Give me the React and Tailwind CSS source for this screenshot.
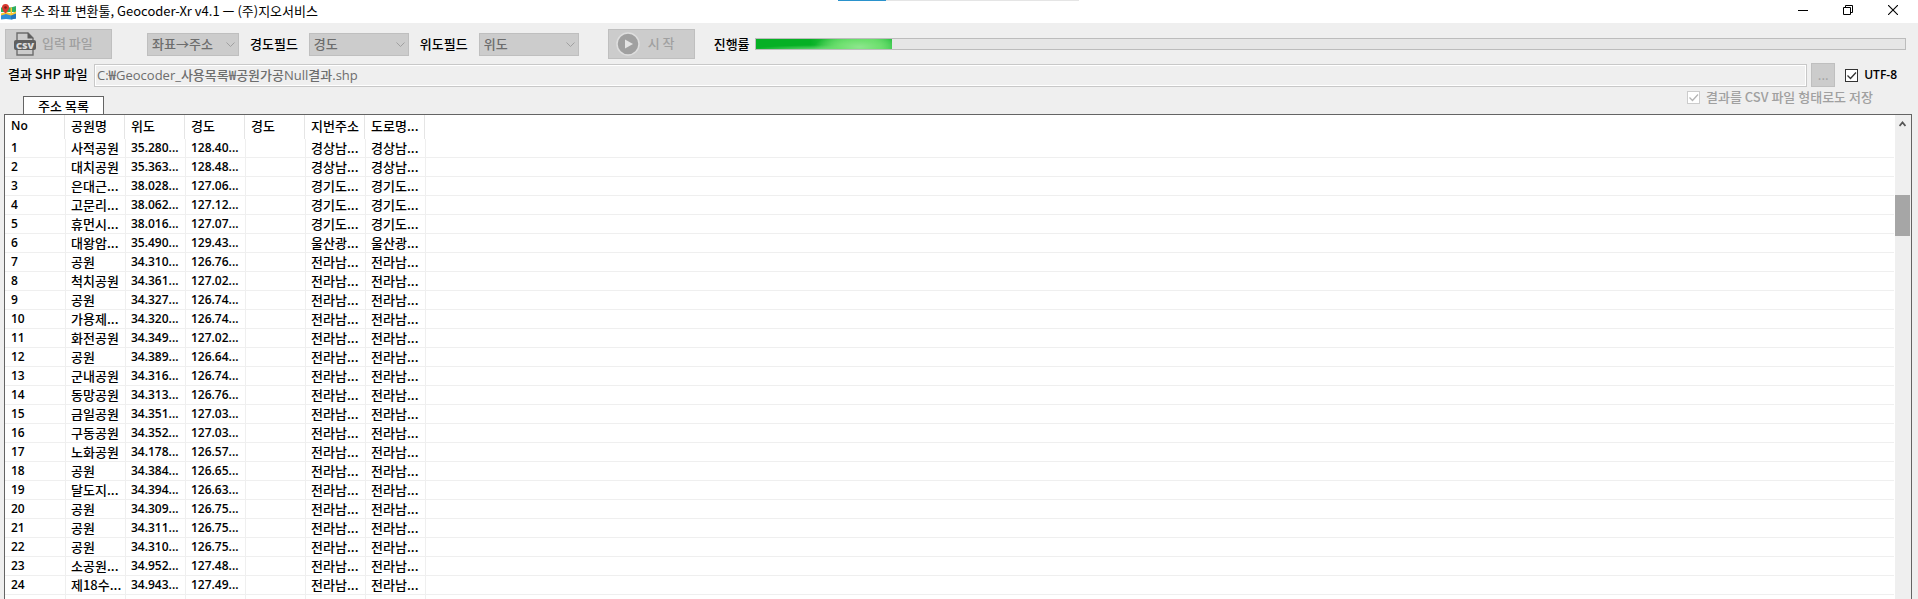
const ROWS = [
  ["사적공원", "35.280...", "128.40...", "경상남..."],
  ["대치공원", "35.363...", "128.48...", "경상남..."],
  ["은대근...", "38.028...", "127.06...", "경기도..."],
  ["고문리...", "38.062...", "127.12...", "경기도..."],
  ["휴먼시...", "38.016...", "127.07...", "경기도..."],
  ["대왕암...", "35.490...", "129.43...", "울산광..."],
  ["공원", "34.310...", "126.76...", "전라남..."],
  ["척치공원", "34.361...", "127.02...", "전라남..."],
  ["공원", "34.327...", "126.74...", "전라남..."],
  ["가용제...", "34.320...", "126.74...", "전라남..."],
  ["화전공원", "34.349...", "127.02...", "전라남..."],
  ["공원", "34.389...", "126.64...", "전라남..."],
  ["군내공원", "34.316...", "126.74...", "전라남..."],
  ["동망공원", "34.313...", "126.76...", "전라남..."],
  ["금일공원", "34.351...", "127.03...", "전라남..."],
  ["구동공원", "34.352...", "127.03...", "전라남..."],
  ["노화공원", "34.178...", "126.57...", "전라남..."],
  ["공원", "34.384...", "126.65...", "전라남..."],
  ["달도지...", "34.394...", "126.63...", "전라남..."],
  ["공원", "34.309...", "126.75...", "전라남..."],
  ["공원", "34.311...", "126.75...", "전라남..."],
  ["공원", "34.310...", "126.75...", "전라남..."],
  ["소공원...", "34.952...", "127.48...", "전라남..."],
  ["제18수...", "34.943...", "127.49...", "전라남..."],
];

const HEADERS = ["No", "공원명", "위도", "경도", "경도", "지번주소", "도로명..."];

const PROGRESS = 11.9;

function MapIcon() {
  return (
    <svg width="15" height="16" viewBox="0 0 15 16" aria-hidden="true">
      <path d="M0 3.500 5 3l5 .5L15 2v6H0z" fill="#2fae62" />
      <path d="M0 10l5-1.500 5 1.500 5-2v6.500l-5 1-5-.5-5 .5z" fill="#2f8fd8" />
      <path d="M10 10l5-2v6.500l-5 1z" fill="#2576bd" />
      <path d="M0 9.500 5 8l5 1.500L15 7.500v2l-5 2-5-1.500-5 1.500z" fill="#fdc62f" />
      <path d="M9.500 3.500h1.500v7H9.500z" fill="#fdc62f" />
      <path d="M4.500 0A3.500 3.500 0 0 1 8 3.500C8 6 4.500 9.500 4.500 9.500S1 6 1 3.500A3.500 3.500 0 0 1 4.500 0z" fill="#d8392f" />
      <circle cx="4.500" cy="3.500" r="1.300" fill="#7c1f1a" />
    </svg>
  );
}

function CsvIcon() {
  return (
    <svg width="22" height="24" viewBox="0 0 22 24" aria-hidden="true">
      <path d="M3 8V1h11l5 5v2M3 18v5h16v-5" fill="none" stroke="#6d6d6d" strokeWidth="1.400" />
      <path d="M13.500 0.500v6H19.500z" fill="#5f5f5f" />
      <rect x="0" y="8" width="22" height="10" rx="2" fill="#5f5f5f" />
      <text x="11" y="16.500" textAnchor="middle" fontFamily="Open Sans" fontWeight="800" fontSize="9.500" fill="#dcdcdc">CSV</text>
    </svg>
  );
}

function PlayIcon() {
  return (
    <svg width="24" height="24" viewBox="0 0 24 24" aria-hidden="true">
      <circle cx="12" cy="12" r="11" fill="#a0a0a0" stroke="#dedede" strokeWidth="1.500" />
      <path d="M9 7.500 17 12l-8 4.500z" fill="#e4e4e4" />
    </svg>
  );
}

function Field({ id, label, value, width }) {
  return (
    <>
      {label && (
        <label htmlFor={id} className="font-medium whitespace-nowrap">
          {label}
        </label>
      )}
      <div className={`relative ${width}`}>
        <select
          id={id}
          disabled
          aria-label={label ? undefined : "변환 방향"}
          className="block h-[23px] w-full appearance-none border border-[#bfbfbf] bg-[#cccccc] px-1 font-medium text-[#6d6d6d] opacity-100"
        >
          <option>{value}</option>
        </select>
        <svg className="pointer-events-none absolute top-2 right-1" width="9" height="7" viewBox="0 0 9 7" aria-hidden="true">
          <path d="M0.500 1.500l4 4 4-4" fill="none" stroke="#a0a0a0" />
        </svg>
      </div>
    </>
  );
}

function Check({ id, label, disabled }) {
  return (
    <div className="flex items-center gap-1.5">
      <span className="relative block size-[13px]">
        <input
          id={id}
          type="checkbox"
          defaultChecked
          disabled={disabled}
          className="block size-[13px] appearance-none border border-[#333333] bg-white disabled:border-[#cccccc]"
        />
        <svg
          className={disabled ? "pointer-events-none absolute inset-0 text-[#b4b4b4]" : "pointer-events-none absolute inset-0 text-[#333333]"}
          width="13"
          height="13"
          viewBox="0 0 13 13"
          aria-hidden="true"
        >
          <path d="M2.500 6.500l3 3 5.500-6" fill="none" stroke="currentColor" strokeWidth="1.300" />
        </svg>
      </span>
      <label
        htmlFor={id}
        className={disabled ? "font-medium whitespace-nowrap text-[#a0a0a0]" : "font-['Open_Sans',sans-serif] text-xs font-semibold whitespace-nowrap"}
      >
        {label}
      </label>
    </div>
  );
}

export default function App() {
  return (
    <div className="flex h-screen flex-col overflow-hidden bg-[#efefef] font-['Noto_Sans_CJK_KR',sans-serif] text-[13px] leading-4 text-black">
      <header className="relative flex h-[23px] shrink-0 items-center bg-white pl-px">
        <MapIcon />
        <h1 className="ml-[5px] pb-0.5 whitespace-nowrap">주소 좌표 변환툴, Geocoder-Xr v4.1 ㅡ (주)지오서비스</h1>
        <div className="absolute top-0 left-[838px] flex h-px w-[241px] bg-[#e5e5e5]">
          <div className="h-px w-12 bg-[#2a92cc]" />
        </div>
        <div className="ml-auto flex items-center gap-[35px] pr-5 pb-1">
          <button aria-label="최소화">
            <svg className="block" width="10" height="10" viewBox="0 0 10 10"><path d="M0 5.500h10" stroke="#000" /></svg>
          </button>
          <button aria-label="이전 크기로">
            <svg className="block" width="10" height="10" viewBox="0 0 10 10"><path d="M.5 2.500h7v7h-7zM2.500 2.500v-2h7v7h-2" fill="none" stroke="#000" /></svg>
          </button>
          <button aria-label="닫기">
            <svg className="block" width="10" height="10" viewBox="0 0 10 10"><path d="M0 0l10 10M10 0L0 10" stroke="#000" strokeWidth="1.100" /></svg>
          </button>
        </div>
      </header>

      <div className="flex shrink-0 items-center pt-1.5 pr-3 pl-[5px]">
        <button disabled className="flex h-[30px] w-[107px] items-center gap-1.5 border border-[#bfbfbf] bg-[#cccccc] pl-2 font-medium text-[#a0a0a0]">
          <CsvIcon />
          <span className="pb-0.5">입력 파일</span>
        </button>
        <div className="ml-[35px] flex items-center gap-[11px]">
          <Field id="direction" value="좌표→주소" width="w-[92px]" />
          <Field id="lng" label="경도필드" value="경도" width="w-[100px]" />
          <Field id="lat" label="위도필드" value="위도" width="w-[100px]" />
        </div>
        <button disabled className="ml-[29px] flex h-[30px] w-[87px] items-center gap-2 border border-[#bfbfbf] bg-[#cccccc] pl-[7px] font-medium text-[#a0a0a0]">
          <PlayIcon />
          <span className="pb-0.5">시 작</span>
        </button>
        <span className="ml-[19px] font-medium whitespace-nowrap">진행률</span>
        <div
          role="progressbar"
          aria-label="진행률"
          aria-valuenow={PROGRESS}
          className="ml-[5px] h-3 flex-1 border border-[#bcbcbc] bg-[#e6e6e6]"
        >
          <div
            className="h-full bg-[radial-gradient(ellipse_45px_14px_at_76%_80%,#8ee68e,#6fe070_45%,transparent),radial-gradient(ellipse_75px_5px_at_50%_110%,#74dc7c,transparent),linear-gradient(90deg,#06b025_40%,#3fca4f_60%,#5fd866_85%,#1eb93a)]"
            style={{ width: `${PROGRESS}%` }}
          />
        </div>
      </div>

      <div className="mt-1 flex shrink-0 items-center pr-[21px] pl-2">
        <label htmlFor="path" className="w-[86px] pb-0.5 font-medium whitespace-nowrap">결과 SHP 파일</label>
        <input
          id="path"
          type="text"
          disabled
          defaultValue="C:₩Geocoder_사용목록₩공원가공Null결과.shp"
          className="h-[23px] min-w-0 flex-1 border border-[#c8c8c8] bg-[#efefef] px-0.5 pb-0.5 font-['Open_Sans','Noto_Sans_CJK_KR',sans-serif] font-medium text-[#6d6d6d] inset-ring inset-ring-white"
        />
        <button disabled aria-label="찾아보기" className="mr-2.5 ml-1 h-6 w-6 border border-[#bfbfbf] bg-[#cccccc] text-[#a0a0a0]">
          ...
        </button>
        <Check id="utf8" label="UTF-8" />
      </div>

      <div className="flex h-[27px] shrink-0 items-end justify-between pr-[41px] pl-[23px]">
        <button className="h-[18px] w-[81px] border border-b-0 border-[#646464] bg-white font-medium">주소 목록</button>
        <div className="min-w-[190px] self-start pt-0.5">
          <Check id="csv" label="결과를 CSV 파일 형태로도 저장" disabled />
        </div>
      </div>

      <main className="mr-1.5 ml-1 flex min-h-0 flex-1 overflow-hidden border border-b-0 border-[#646464] bg-white">
        <div className="mr-px min-w-0 flex-1">
          <table className="w-full table-fixed border-separate border-spacing-0 font-medium">
            <thead>
              <tr className="h-6">
                {HEADERS.map((h, i) => (
                  <th
                    key={i}
                    className="w-[60px] overflow-hidden border-r border-[#e5e5e5] p-0 pb-0.5 pl-1.5 text-left font-medium whitespace-nowrap first:font-['Open_Sans',sans-serif] first:text-xs first:font-semibold"
                  >
                    {h}
                  </th>
                ))}
                <th className="p-0" aria-hidden="true" />
              </tr>
            </thead>
            <tbody>
              {ROWS.map(([name, lat, lng, addr], i) => (
                <tr key={i} className="h-[19px] [&>td]:overflow-hidden [&>td]:border-b [&>td]:border-[#efefef] [&>td]:p-0 [&>td]:whitespace-nowrap [&>td+td]:border-l">
                  <td><div className="pl-1.5 font-['Open_Sans',sans-serif] text-xs font-semibold">{i + 1}</div></td>
                  <td><div className="pl-[5px]">{name}</div></td>
                  <td><div className="pl-[5px] font-['Open_Sans',sans-serif] text-xs font-semibold">{lat}</div></td>
                  <td><div className="pl-[5px] font-['Open_Sans',sans-serif] text-xs font-semibold">{lng}</div></td>
                  <td />
                  <td><div className="pl-[5px]">{addr}</div></td>
                  <td><div className="pl-[5px]">{addr}</div></td>
                  <td />
                </tr>
              ))}
              <tr className="h-[19px] [&>td]:border-[#efefef] [&>td+td]:border-l">
                {[...HEADERS, ""].map((_, i) => (
                  <td key={i} />
                ))}
              </tr>
            </tbody>
          </table>
        </div>
        <div className="flex w-4 flex-col bg-[#efefef] pt-1.5">
          <svg className="ml-1 block" width="7" height="6" viewBox="0 0 7 6" aria-hidden="true">
            <path d="M0.500 5l3-3.500 3 3.500" fill="none" stroke="#555" strokeWidth="1.800" />
          </svg>
          <div className="mt-[68px] h-[41px] w-[15px] bg-[#a6a6a6]" />
        </div>
      </main>
    </div>
  );
}
